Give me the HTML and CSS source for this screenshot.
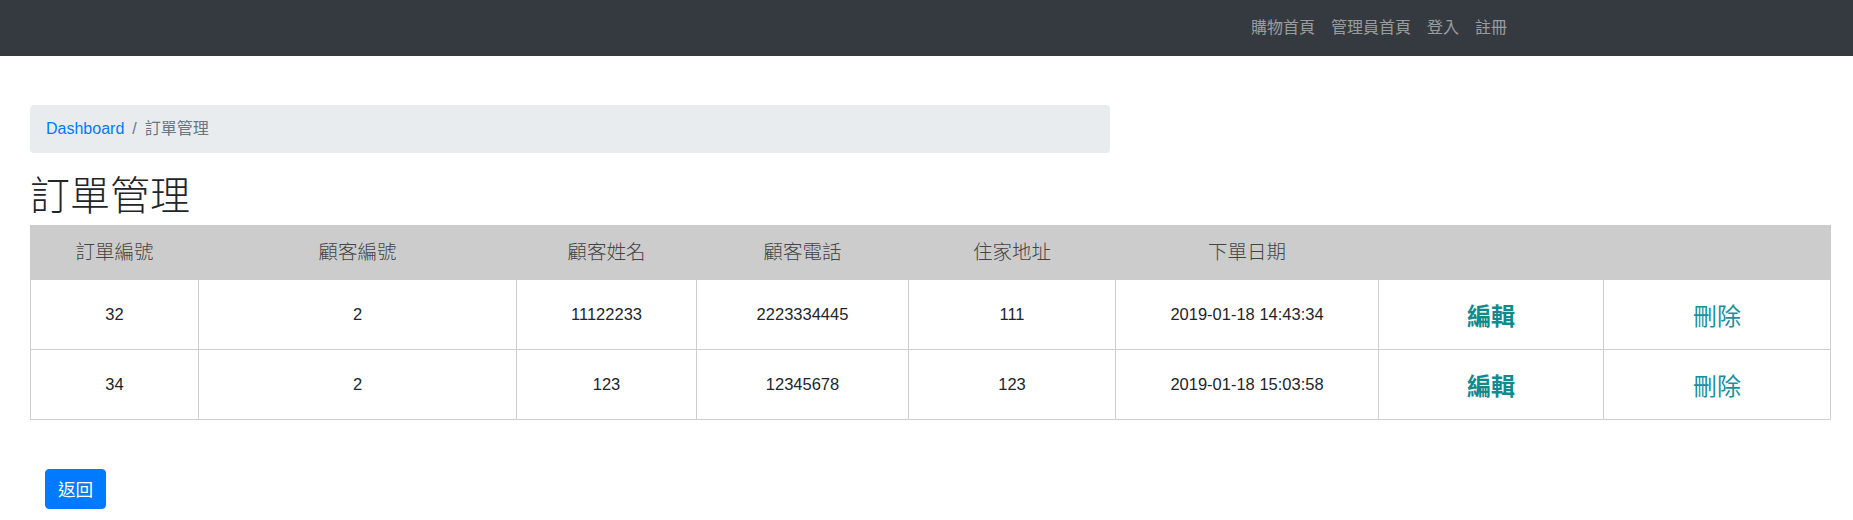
FILE: index.html
```html
<!DOCTYPE html>
<html lang="zh-Hant">
<head>
<meta charset="utf-8">
<title>訂單管理</title>
<link rel="stylesheet" href="styles.css">
</head>
<body>
<nav class="navbar">
  <ul class="nav-list">
    <li><a class="nav-link" href="#">購物首頁</a></li>
    <li><a class="nav-link" href="#">管理員首頁</a></li>
    <li><a class="nav-link" href="#">登入</a></li>
    <li><a class="nav-link" href="#">註冊</a></li>
  </ul>
</nav>
<main class="main">
  <ol class="breadcrumb">
    <li class="crumb"><a href="#" class="crumb-link">Dashboard</a></li>
    <li class="crumb crumb-active">訂單管理</li>
  </ol>
  <h1 class="title">訂單管理</h1>
  <table class="orders">
    <colgroup>
      <col class="c1"><col class="c2"><col class="c3"><col class="c4">
      <col class="c5"><col class="c6"><col class="c7"><col class="c8">
    </colgroup>
    <thead>
      <tr class="head-row">
        <th>訂單編號</th>
        <th>顧客編號</th>
        <th>顧客姓名</th>
        <th>顧客電話</th>
        <th>住家地址</th>
        <th>下單日期</th>
        <th></th>
        <th></th>
      </tr>
    </thead>
    <tbody>
      <tr>
        <td>32</td>
        <td>2</td>
        <td>11122233</td>
        <td>2223334445</td>
        <td>111</td>
        <td>2019-01-18 14:43:34</td>
        <td><a href="#" class="act act-edit">編輯</a></td>
        <td><a href="#" class="act act-del">刪除</a></td>
      </tr>
      <tr>
        <td>34</td>
        <td>2</td>
        <td>123</td>
        <td>12345678</td>
        <td>123</td>
        <td>2019-01-18 15:03:58</td>
        <td><a href="#" class="act act-edit">編輯</a></td>
        <td><a href="#" class="act act-del">刪除</a></td>
      </tr>
    </tbody>
  </table>
  <div class="actions">
    <a href="#" class="btn-back">返回</a>
  </div>
</main>
</body>
</html>
```
FILE: styles.css
```css
* { box-sizing: border-box; }

html, body {
  margin: 0;
  padding: 0;
  background: #fff;
}

body {
  font-family: "Liberation Sans", "Noto Sans CJK TC", sans-serif;
  font-size: 16px;
  line-height: 1.5;
  color: #212529;
}

.navbar {
  height: 56px;
  background: #343a40;
  display: flex;
  justify-content: flex-end;
  align-items: center;
  padding: 0 338px 0 16px;
}

.nav-list {
  list-style: none;
  margin: 0;
  padding: 0;
  display: flex;
}

.nav-link {
  display: block;
  padding: 8px 8px;
  color: rgba(255, 255, 255, 0.5);
  text-decoration: none;
  font-size: 16px;
  line-height: 24px;
}

.main {
  padding: 49px 23px 0 30px;
}

.breadcrumb {
  display: flex;
  list-style: none;
  margin: 0 0 16px 0;
  padding: 12px 16px;
  width: 60%;
  height: 48px;
  background: #e9ecef;
  border-radius: 4px;
  line-height: 24px;
}

.crumb-link {
  color: #007bff;
  text-decoration: none;
}

.crumb-active {
  color: #6c757d;
}

.crumb + .crumb::before {
  content: "/";
  color: #6c757d;
  padding: 0 8px;
}

.title {
  margin: 0 0 8px 0;
  font-family: "Noto Sans CJK TC", sans-serif;
  font-size: 40px;
  font-weight: 300;
  line-height: 48px;
  color: #212529;
}

.orders {
  width: 1800px;
  table-layout: fixed;
  border-collapse: collapse;
}

.c1 { width: 168px; }
.c2 { width: 318px; }
.c3 { width: 180px; }
.c4 { width: 212px; }
.c5 { width: 207px; }
.c6 { width: 263px; }
.c7 { width: 225px; }
.c8 { width: 227px; }

.head-row {
  background: #cccccc;
  height: 54px;
}

.head-row th {
  font-family: "Noto Sans CJK TC", sans-serif;
  font-size: 19.5px;
  font-weight: 300;
  color: #444;
  text-align: center;
  vertical-align: middle;
  padding: 0 0 4px 0;
  border: 1px solid #cccccc;
}

.orders td {
  height: 70px;
  text-align: center;
  vertical-align: middle;
  border: 1px solid #cfcfcf;
  font-size: 16.5px;
  padding: 0;
  color: #212529;
}

.act {
  font-family: "Noto Sans CJK TC", sans-serif;
  font-size: 24px;
  text-decoration: none;
  color: #118a8e;
}

.act-edit {
  font-weight: 700;
}

.act-del {
  font-weight: 400;
  color: #17929c;
}

.actions {
  padding: 49px 0 0 15px;
}

.btn-back {
  display: inline-block;
  background: #007bff;
  border: 1px solid #007bff;
  color: #fff;
  text-decoration: none;
  font-family: "Noto Sans CJK TC", sans-serif;
  font-size: 17.6px;
  line-height: 26px;
  padding: 6px 12px;
  border-radius: 4px;
}
```
